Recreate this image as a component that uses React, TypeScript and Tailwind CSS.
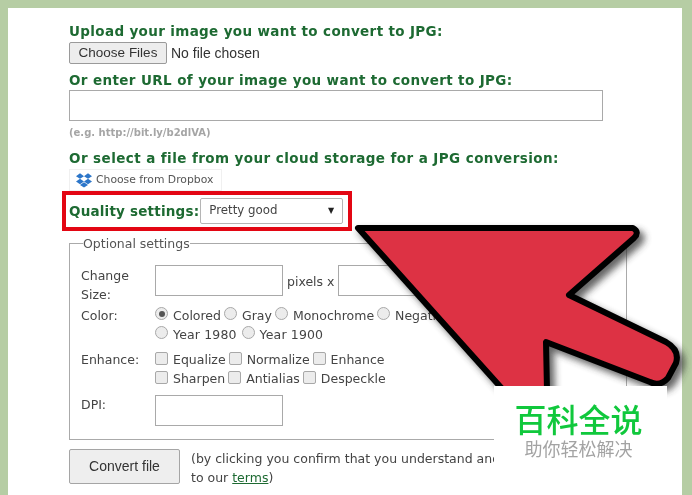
const headingClass = "text-[13.5px] font-bold leading-[18px] text-[#1d6a32] whitespace-nowrap";
const textInput = "block h-[31px] w-[128px] border border-[#a9a9a9] bg-white";

const Radio = ({ checked }: { checked?: boolean }) => (
  <span className="inline-flex h-[13px] w-[13px] shrink-0 -translate-y-[2px] items-center justify-center rounded-full border border-[#a8a8a8] bg-[#ececec]">
    {checked && <span className="h-[6px] w-[6px] rounded-full bg-[#555]" />}
  </span>
);

const Check = () => (
  <span className="inline-block h-[13px] w-[13px] shrink-0 -translate-y-[1px] rounded-[2px] border border-[#a8a8a8] bg-[#ececec]" />
);

const Option = ({ label, control }: { label: string; control: React.ReactNode }) => (
  <span className="flex items-center gap-[5px]">
    {control}
    <span>{label}</span>
  </span>
);

const DropboxIcon = () => (
  <svg viewBox="0 0 24 24" className="h-[16px] w-[16px]" fill="#2c76c9">
    <path d="M6 2 0 6.2l6 4 6-4zM18 2l-6 4.2 6 4 6-4zM0 14.2l6 4 6-4-6-4zM18 10.2l-6 4 6 4 6-4zM6 19.4l6 4 6-4-6-3.9z" />
  </svg>
);

const arrowPath = "M358 228 L633 228 Q640 232 634 238 L569 295 L666 342 Q680 350 676 363 L668 378 Q660 387 650 382 L546 342 L548 440 Z";

const Arrow = () => (
  <svg className="absolute left-[332px] top-[202px] h-[285px] w-[352px] overflow-visible" viewBox="340 210 352 285">
    <defs>
      <filter id="arrow-shadow" x="-10%" y="-10%" width="125%" height="125%">
        <feGaussianBlur stdDeviation="3.5" />
      </filter>
    </defs>
    <path d={arrowPath} fill="#333" stroke="#333" strokeWidth="6" transform="translate(5 5)" filter="url(#arrow-shadow)" opacity="0.75" />
    <path d={arrowPath} fill="#dd3244" stroke="#000" strokeWidth="6" strokeLinejoin="round" />
  </svg>
);

export default function App() {
  return (
    <div className="h-[495px] w-[692px] overflow-hidden bg-[#b6cda4] pl-[8px] pr-[10px] pt-[8px] font-['DejaVu_Sans',sans-serif] text-[12.5px] text-[#444] blur-[0.35px]">
      <div className="relative h-[487px] bg-white">
        <div className="pl-[61px] pt-[14px]">
          <h2 className={`${headingClass} tracking-[0.35px]`}>Upload your image you want to convert to JPG:</h2>
          <div className="mt-[2px] flex items-center gap-[4px] font-['Liberation_Sans',sans-serif] text-[14px] text-[#333]">
            <button className="h-[22px] w-[98px] rounded-[2px] border border-[#9a9a9a] bg-[#ededed] text-[13.5px]">Choose Files</button>
            <span>No file chosen</span>
          </div>
          <h2 className={`${headingClass} mt-[7px] tracking-[0.38px]`}>Or enter URL of your image you want to convert to JPG:</h2>
          <div className="mt-[1px] h-[31px] w-[534px] border border-[#a9a9a9]" />
          <p className="mt-[5px] text-[10px] font-bold leading-[13px] text-[#a5a5a5]">(e.g. http://bit.ly/b2dlVA)</p>
          <h2 className={`${headingClass} mt-[10px] tracking-[0.42px]`}>Or select a file from your cloud storage for a JPG conversion:</h2>
          <div className="mt-[2px] flex h-[22px] w-[153px] items-center gap-[4px] border border-[#f0f0f0] pl-[6px] text-[10.8px] text-[#555]">
            <DropboxIcon />
            <span>Choose from Dropbox</span>
          </div>
          <div className="-ml-[7px] flex h-[40px] w-[290px] items-center border-[4px] border-[#e30613] pl-[3px]">
            <span className="text-[13.5px] font-bold tracking-[0.2px] text-[#1d6a32]">Quality settings:</span>
            <div className="ml-px flex h-[26px] w-[143px] items-center justify-between rounded-[2px] border border-[#b5b5b5] pl-[8px] pr-[8px] text-[11.8px] text-[#444]">
              <span>Pretty good</span>
              <span className="text-[8px] text-[#222]">▼</span>
            </div>
          </div>
          <fieldset className="mt-[5px] h-[204px] w-[558px] border border-[#aaa] pl-[11px]">
            <legend className="ml-[2px] text-[12.5px] leading-[15px] text-[#555]">Optional settings</legend>
            <div className="mt-[11px] grid grid-cols-[74px_1fr] leading-[19px]">
              <div className="mt-[4px]">
                Change
                <br />
                Size:
              </div>
              <div className="mt-[3px] flex items-start gap-[3px]">
                <div className={textInput} />
                <span className="mx-[1px] mt-[7px]">pixels x</span>
                <div className={textInput} />
              </div>
              <div className="mt-[2px]">Color:</div>
              <div className="mt-[2px] whitespace-nowrap">
                <div className="flex gap-[3px]">
                  <Option label="Colored" control={<Radio checked />} />
                  <Option label="Gray" control={<Radio />} />
                  <Option label="Monochrome" control={<Radio />} />
                  <Option label="Negative" control={<Radio />} />
                </div>
                <div className="flex gap-[5px] tracking-[0.15px]">
                  <Option label="Year 1980" control={<Radio />} />
                  <Option label="Year 1900" control={<Radio />} />
                </div>
              </div>
              <div className="mt-[6px]">Enhance:</div>
              <div className="mt-[6px] whitespace-nowrap">
                <div className="flex gap-[3px]">
                  <Option label="Equalize" control={<Check />} />
                  <Option label="Normalize" control={<Check />} />
                  <Option label="Enhance" control={<Check />} />
                </div>
                <div className="flex gap-[3px]">
                  <Option label="Sharpen" control={<Check />} />
                  <Option label="Antialias" control={<Check />} />
                  <Option label="Despeckle" control={<Check />} />
                </div>
              </div>
              <div className="mt-[7px]">DPI:</div>
              <div className="mt-[7px]">
                <div className={textInput} />
              </div>
            </div>
          </fieldset>
          <div className="mt-[9px] flex items-start gap-[11px]">
            <button className="h-[35px] w-[111px] rounded-[2px] border border-[#a5a5a5] bg-[#eeeeee] font-['Liberation_Sans',sans-serif] text-[14px] text-[#333]">
              Convert file
            </button>
            <p className="whitespace-nowrap leading-[19px]">
              (by clicking you confirm that you understand and agree
              <br />
              to our <span className="text-[#1d6a32] underline">terms</span>)
            </p>
          </div>
        </div>
        <Arrow />
        <div className="absolute left-[486px] top-[378px] flex h-[84px] w-[173px] flex-col items-center bg-white pr-[4px] pt-[14px] font-['Noto_Sans_CJK_SC',sans-serif]">
          <span className="text-[32px] font-medium leading-[37px] text-[#10c83c]">百科全说</span>
          <span className="text-[18px] leading-[23px] text-[#a3a3a3]">助你轻松解决</span>
        </div>
      </div>
    </div>
  );
}
